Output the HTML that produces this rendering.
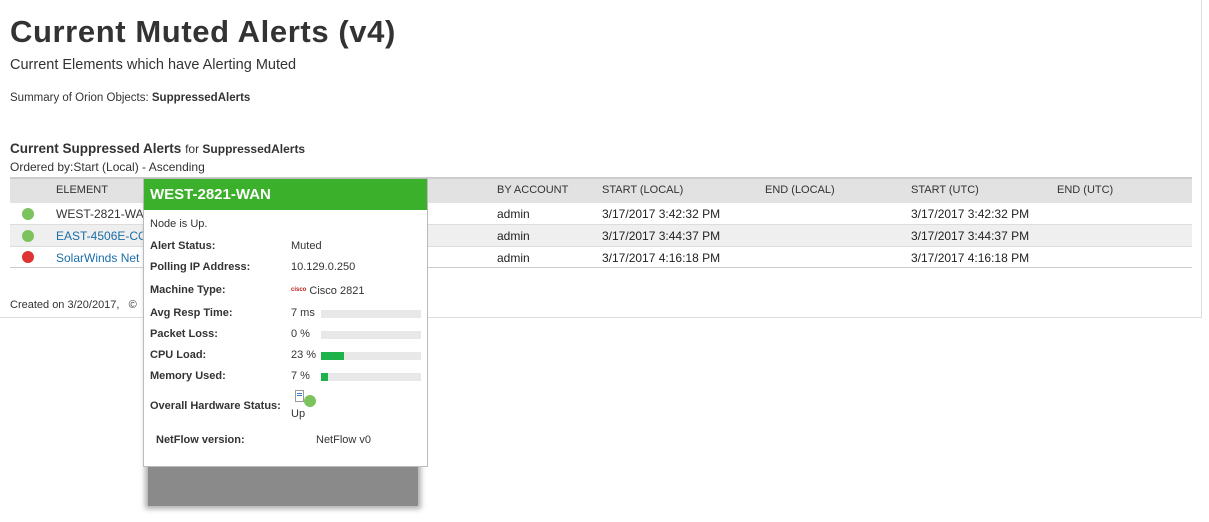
<!DOCTYPE html>
<html><head><meta charset="utf-8"><style>
*{margin:0;padding:0;box-sizing:border-box}
body{width:1209px;height:522px;background:#fff;font-family:"Liberation Sans",sans-serif;color:#333;position:relative;overflow:hidden}
.a{position:absolute;white-space:nowrap}
.frame{position:absolute;left:0;top:0;width:1202px;height:318px;border-right:1px solid #ddd;border-bottom:1px solid #ddd}
.h{font-size:11px;color:#333}
.c{font-size:12px;color:#222}
.lnk{color:#1a6ea8}
.dot{position:absolute;width:12px;height:12px;border-radius:50%}
.tt{position:absolute;left:143px;top:178px;width:285px;height:289px;background:#fff;border:1px solid #bbb}
.l{position:absolute;left:6px;font-size:11px;font-weight:bold;color:#333;white-space:nowrap}
.v{position:absolute;left:147px;font-size:11px;color:#333;white-space:nowrap}
.bar{position:absolute;left:177px;width:100px;height:8px;background:#e8e8e8}
.bar i{display:block;height:8px;background:#1db34a}
</style></head><body>
<div class="frame"></div>
<div class="a" style="left:10px;top:14px;font-size:31px;font-weight:bold;color:#333;letter-spacing:0.6px">Current Muted Alerts (v4)</div>
<div class="a" style="left:10px;top:57px;font-size:14.5px">Current Elements which have Alerting Muted</div>
<div class="a" style="left:10px;top:92px;font-size:11.5px">Summary of Orion Objects: <b>SuppressedAlerts</b></div>
<div class="a" style="left:10px;top:141px;font-size:13.5px"><b>Current Suppressed Alerts</b> <span style="font-size:12px">for <b>SuppressedAlerts</b></span></div>
<div class="a" style="left:10px;top:160px;font-size:12px">Ordered by:Start (Local) - Ascending</div>

<div class="a" style="left:10px;top:177px;width:1182px;height:26px;background:#e2e2e2;border-top:2px solid #ccc"></div>
<div class="a" style="left:10px;top:203px;width:1182px;height:22px;border-bottom:1px solid #ddd"></div>
<div class="a" style="left:10px;top:225px;width:1182px;height:22px;background:#efefef;border-bottom:1px solid #ddd"></div>
<div class="a" style="left:10px;top:247px;width:1182px;height:21px;border-bottom:1px solid #ccc"></div>

<div class="a h" style="left:56px;top:184px">ELEMENT</div>
<div class="a h" style="left:497px;top:184px">BY ACCOUNT</div>
<div class="a h" style="left:602px;top:184px">START (LOCAL)</div>
<div class="a h" style="left:765px;top:184px">END (LOCAL)</div>
<div class="a h" style="left:911px;top:184px">START (UTC)</div>
<div class="a h" style="left:1057px;top:184px">END (UTC)</div>

<div class="dot" style="left:22px;top:208px;background:#7cc35e"></div>
<div class="dot" style="left:22px;top:230px;background:#7cc35e"></div>
<div class="dot" style="left:22px;top:251px;background:#dd3333"></div>
<div class="a c" style="left:56px;top:207px;color:#333">WEST-2821-WAN</div>
<div class="a c lnk" style="left:56px;top:229px">EAST-4506E-CORE</div>
<div class="a c lnk" style="left:56px;top:251px">SolarWinds Net</div>
<div class="a c" style="left:497px;top:207px">admin</div>
<div class="a c" style="left:497px;top:229px">admin</div>
<div class="a c" style="left:497px;top:251px">admin</div>
<div class="a c" style="left:602px;top:207px">3/17/2017 3:42:32 PM</div>
<div class="a c" style="left:602px;top:229px">3/17/2017 3:44:37 PM</div>
<div class="a c" style="left:602px;top:251px">3/17/2017 4:16:18 PM</div>
<div class="a c" style="left:911px;top:207px">3/17/2017 3:42:32 PM</div>
<div class="a c" style="left:911px;top:229px">3/17/2017 3:44:37 PM</div>
<div class="a c" style="left:911px;top:251px">3/17/2017 4:16:18 PM</div>
<div class="a" style="left:10px;top:299px;font-size:11px">Created on 3/20/2017, &nbsp;&nbsp;©</div>

<div class="a" style="left:148px;top:200px;width:270px;height:306px;background:#8a8a8a;box-shadow:0 0 5px 3px #b0b0b0"></div>
<div class="tt">
<div style="height:31px;background:#3bb02a;color:#fff;font-weight:bold;font-size:15px;padding:7px 0 0 6px">WEST-2821-WAN</div>
<div class="v" style="left:6px;top:39px">Node is Up.</div>
<div class="l" style="top:61px">Alert Status:</div><div class="v" style="top:61px">Muted</div>
<div class="l" style="top:82px">Polling IP Address:</div><div class="v" style="top:82px">10.129.0.250</div>
<div class="l" style="top:105px">Machine Type:</div><div class="v" style="top:106px"><span style="color:#b22;font-size:6px;font-weight:bold;vertical-align:3px">cisco</span> Cisco 2821</div>
<div class="l" style="top:128px">Avg Resp Time:</div><div class="v" style="top:128px">7 ms</div><div class="bar" style="top:131px"></div>
<div class="l" style="top:149px">Packet Loss:</div><div class="v" style="top:149px">0 %</div><div class="bar" style="top:152px"></div>
<div class="l" style="top:170px">CPU Load:</div><div class="v" style="top:170px">23 %</div><div class="bar" style="top:173px"><i style="width:23px"></i></div>
<div class="l" style="top:191px">Memory Used:</div><div class="v" style="top:191px">7 %</div><div class="bar" style="top:194px"><i style="width:7px"></i></div>
<div class="l" style="top:221px">Overall Hardware Status:</div>
<div class="a" style="left:151px;top:211px;width:9px;height:12px;border:1px solid #999;background:#fff"></div>
<div class="a" style="left:153px;top:214px;width:5px;height:1px;background:#3a7fc0"></div>
<div class="a" style="left:153px;top:216px;width:5px;height:1px;background:#3a7fc0"></div>
<div class="dot" style="left:160px;top:216px;background:#7cc35e"></div>
<div class="v" style="top:229px;left:147px">Up</div>
<div class="l" style="top:255px;left:12px">NetFlow version:</div><div class="v" style="top:255px;left:172px">NetFlow v0</div>
</div>
</body></html>
